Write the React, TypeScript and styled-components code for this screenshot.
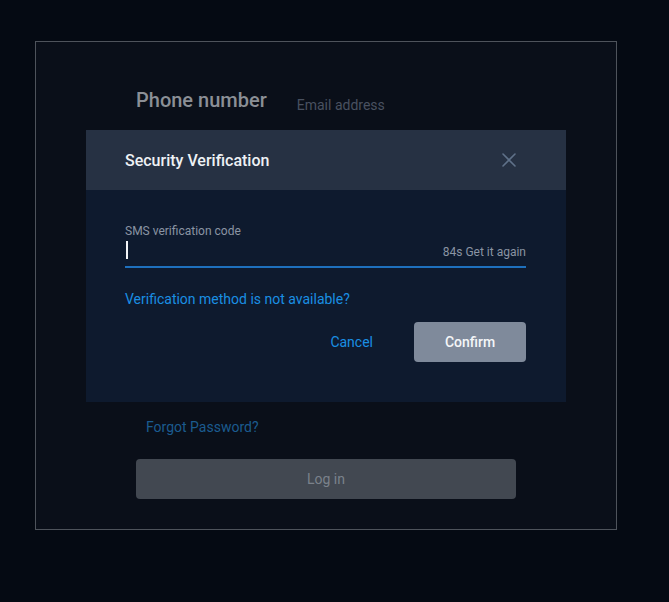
import React from 'react';
import styled, { createGlobalStyle } from 'styled-components';

const GlobalStyle = createGlobalStyle`
	html, body {
		margin: 0;
		padding: 0;
		background: #050a13;
	}
	body {
		font-family: Roboto, 'Liberation Sans', Arial, sans-serif;
	}
	* {
		box-sizing: border-box;
	}
`;

function App() {
	const [code, setCode] = React.useState('');
	const [seconds] = React.useState(84);

	return (
		<Page>
			<GlobalStyle />
			<Card>
				<Tabs>
					<Tab active>Phone number</Tab>
					<Tab>Email address</Tab>
				</Tabs>
				<Fields>
					<HiddenField />
					<HiddenField />
				</Fields>
				<Forgot href="#">Forgot Password?</Forgot>
				<LoginBtn disabled>Log in</LoginBtn>

				<Modal role="dialog" aria-labelledby="verify-title">
					<ModalHeader>
						<ModalTitle id="verify-title">Security Verification</ModalTitle>
						<CloseBtn aria-label="Close">
							<svg width="14" height="14" viewBox="0 0 14 14" fill="none">
								<path
									d="M1 1L13 13M13 1L1 13"
									stroke="currentColor"
									strokeWidth="1.6"
									strokeLinecap="round"
								/>
							</svg>
						</CloseBtn>
					</ModalHeader>
					<ModalBody>
						<FieldLabel htmlFor="sms">SMS verification code</FieldLabel>
						<CodeRow>
							<CodeInput
								id="sms"
								value={code}
								onChange={(e) => setCode(e.target.value)}
							/>
							<Caret />
							<Resend>{seconds}s Get it again</Resend>
						</CodeRow>
						<MethodLink href="#">Verification method is not available?</MethodLink>
						<Actions>
							<CancelBtn>Cancel</CancelBtn>
							<ConfirmBtn>Confirm</ConfirmBtn>
						</Actions>
					</ModalBody>
				</Modal>
			</Card>
		</Page>
	);
}

const Page = styled.div`
	min-height: 602px;
	padding: 41px 0 0 35px;
	background: #050a13;
`;

const Card = styled.div`
	position: relative;
	width: 582px;
	height: 489px;
	border: 1px solid #4e535b;
	background: #0a0f19;
	padding: 46px 100px 0;
	display: flex;
	flex-direction: column;
`;

const Tabs = styled.div`
	display: flex;
	align-items: baseline;
	gap: 30px;
	height: 24px;
`;

const Tab = styled.div<{ active?: boolean }>`
	font-size: ${(p) => (p.active ? '20px' : '14px')};
	line-height: 24px;
	font-weight: ${(p) => (p.active ? 500 : 400)};
	color: ${(p) => (p.active ? '#8b8f96' : '#495160')};
	position: relative;
	top: ${(p) => (p.active ? '0' : '3px')};
`;

const Fields = styled.div`
	height: 305px;
	display: flex;
	flex-direction: column;
	gap: 24px;
	padding-top: 40px;
`;

const HiddenField = styled.div`
	height: 44px;
	border-bottom: 1px solid #1c2432;
`;

const Forgot = styled.a`
	display: block;
	margin-left: 10px;
	font-size: 14px;
	line-height: 20px;
	color: #1b5b8f;
	text-decoration: none;
`;

const LoginBtn = styled.button`
	margin-top: 22px;
	width: 380px;
	height: 40px;
	border: none;
	border-radius: 4px;
	background: #424851;
	color: #7b828b;
	font-family: inherit;
	font-size: 14px;
`;

const Modal = styled.div`
	position: absolute;
	left: 50px;
	top: 88px;
	width: 480px;
	height: 272px;
	background: #0e1a2e;
	display: flex;
	flex-direction: column;
`;

const ModalHeader = styled.div`
	height: 60px;
	background: #263143;
	display: flex;
	align-items: center;
	justify-content: space-between;
	padding: 0 50px 0 39px;
`;

const ModalTitle = styled.h2`
	margin: 0;
	font-size: 16px;
	font-weight: 500;
	color: #eef1f5;
`;

const CloseBtn = styled.button`
	border: none;
	background: none;
	padding: 0;
	display: flex;
	color: #5f7189;
	cursor: pointer;
`;

const ModalBody = styled.div`
	padding: 33px 40px 0 39px;
	display: flex;
	flex-direction: column;
`;

const FieldLabel = styled.label`
	font-size: 12px;
	line-height: 16px;
	color: #8a94a3;
`;

const CodeRow = styled.div`
	position: relative;
	display: flex;
	align-items: center;
	height: 28px;
	margin-top: 1px;
	border-bottom: 2px solid #1e70bd;
`;

const CodeInput = styled.input`
	flex: 1;
	height: 100%;
	border: none;
	outline: none;
	background: transparent;
	color: #ffffff;
	font-family: inherit;
	font-size: 14px;
	padding: 0;
	caret-color: transparent;
`;

const Caret = styled.span`
	position: absolute;
	left: 1px;
	top: 1px;
	width: 2px;
	height: 18px;
	background: #f2f4f7;
`;

const Resend = styled.span`
	font-size: 12px;
	color: #8a94a3;
	white-space: nowrap;
	padding-bottom: 2px;
`;

const MethodLink = styled.a`
	margin-top: 21px;
	font-size: 14px;
	line-height: 20px;
	color: #1a8fe3;
	text-decoration: none;
`;

const Actions = styled.div`
	margin-top: 13px;
	display: flex;
	justify-content: flex-end;
	gap: 21px;
`;

const CancelBtn = styled.button`
	border: none;
	background: none;
	padding: 0 20px;
	height: 40px;
	color: #1a8fe3;
	font-family: inherit;
	font-size: 14px;
	cursor: pointer;
`;

const ConfirmBtn = styled.button`
	width: 112px;
	height: 40px;
	border: none;
	border-radius: 4px;
	background: #7f8a9b;
	color: #f4f6f8;
	font-family: inherit;
	font-size: 14px;
	font-weight: 500;
	cursor: pointer;
`;

export default App;
